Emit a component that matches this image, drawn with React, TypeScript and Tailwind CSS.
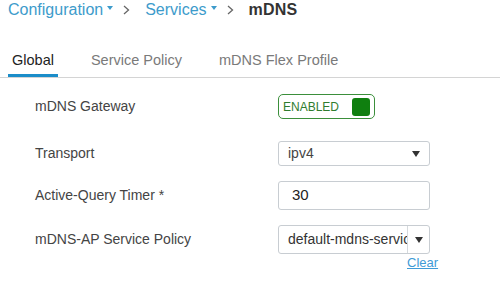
import React from 'react';

const font = { fontFamily: '"Liberation Sans", Arial, sans-serif' };

function Caret({ className = '' }: { className?: string }) {
  return (
    <svg width="8" height="6" viewBox="0 0 8 6" className={className}>
      <path d="M0 0 L8 0 L4 6 Z" fill="currentColor" />
    </svg>
  );
}

function Crumb({ label }: { label: string }) {
  return (
    <div className="flex items-center text-[#3d9bcb]">
      <span>{label}</span>
      <svg width="6" height="4" viewBox="0 0 6 4" className="ml-[4px] mb-[5px]">
        <path d="M0 0 L6 0 L3 4 Z" fill="currentColor" />
      </svg>
      <svg width="7" height="10" viewBox="0 0 7 10" className="ml-[10px] mr-[15px] text-[#666]">
        <path d="M1 1 L5.5 5 L1 9" stroke="currentColor" strokeWidth="1.3" fill="none" />
      </svg>
    </div>
  );
}

export default function App() {
  const tabs = ['Global', 'Service Policy', 'mDNS Flex Profile'];

  return (
    <div className="w-[500px] h-[298px] bg-white overflow-hidden" style={font}>
      {/* Breadcrumb */}
      <div className="flex items-center h-[20px] pl-[8px] text-[16px] leading-[20px]">
        <Crumb label="Configuration" />
        <Crumb label="Services" />
        <span className="text-[#333] font-bold tracking-[0.2px]">mDNS</span>
      </div>

      {/* Tabs */}
      <div className="mt-[29px] flex gap-[29px] pl-[8px] border-b border-[#d4d4d4]">
        {tabs.map((t, i) => (
          <div
            key={t}
            className={`h-[28px] px-[4px] pt-[1px] text-[14.5px] leading-[20px] border-b-[3px] ${
              i === 0 ? 'border-[#1b8dc9] text-[#222]' : 'border-transparent text-[#7a7a7a]'
            }`}
          >
            {t}
          </div>
        ))}
      </div>

      {/* Form */}
      <div className="mt-[16px] pl-[35px] text-[14px] text-[#444]">
        <div className="flex items-center h-[25px]">
          <div className="w-[243px]">mDNS Gateway</div>
          <div className="w-[97px] h-[25px] flex items-center justify-between pl-[4px] pr-[4px] border border-[#3b8f3b] rounded-[5px]">
            <span className="text-[12px] text-[#2f7d2f]">ENABLED</span>
            <span className="w-[18px] h-[18px] rounded-[3px] bg-[#0f7f0f]" />
          </div>
        </div>

        <div className="flex items-center h-[25px] mt-[22px]">
          <div className="w-[243px]">Transport</div>
          <div className="w-[152px] h-[25px] flex items-center justify-between pl-[9px] pr-[9px] border border-[#c8cdd2] rounded-[3px] text-[#444]">
            <span>ipv4</span>
            <Caret className="text-[#333]" />
          </div>
        </div>

        <div className="flex items-center h-[29px] mt-[15px]">
          <div className="w-[243px]">Active-Query Timer *</div>
          <div className="w-[152px] h-[29px] flex items-center pl-[13px] border border-[#c8cdd2] rounded-[3px] text-[15px] text-[#222]">
            30
          </div>
        </div>

        <div className="flex items-center h-[29px] mt-[15px]">
          <div className="w-[243px]">mDNS-AP Service Policy</div>
          <div className="w-[152px] h-[29px] flex items-center border border-[#c8cdd2] rounded-[3px] text-[#333] overflow-hidden">
            <span className="w-[128px] pl-[9px] whitespace-nowrap overflow-hidden">default-mdns-service-policy</span>
            <div className="flex-1 h-full flex items-center justify-center border-l border-[#d6dadd]">
              <Caret />
            </div>
          </div>
        </div>

        <div className="pl-[372px] -mt-[2px]">
          <span className="text-[13px] leading-[16px] text-[#3f9bd6] underline">Clear</span>
        </div>
      </div>
    </div>
  );
}
